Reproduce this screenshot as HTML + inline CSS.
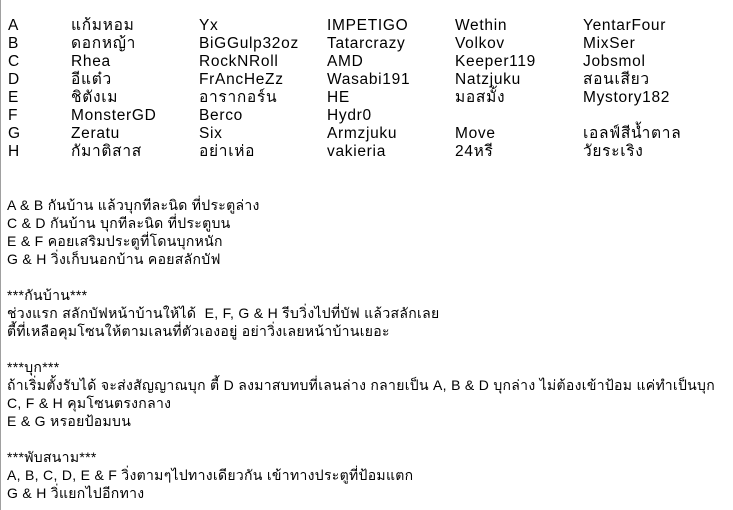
<!DOCTYPE html>
<html><head><meta charset="utf-8"><style>
body{margin:0;width:733px;height:510px;background:#fff;position:relative;overflow:hidden;color:#000}
.lb{position:absolute;left:0;top:0;width:1px;height:510px;background:#a0a0a0}
.t{position:absolute;font-family:"Liberation Sans",sans-serif;font-size:15.5px;letter-spacing:0.7px;line-height:18px;white-space:nowrap}
.b{position:absolute;left:7px;font-family:"Liberation Sans Narrow","Liberation Sans",sans-serif;font-size:14px;letter-spacing:0.3px;line-height:18px;white-space:nowrap}
</style></head><body>
<div class="lb"></div>
<div class="t" style="left:8px;top:17px">A<br>B<br>C<br>D<br>E<br>F<br>G<br>H</div>
<div class="t" style="left:71px;top:17px">แก้มหอม<br>ดอกหญ้า<br>Rhea<br>อีแต๋ว<br>ชิตังเม<br>MonsterGD<br>Zeratu<br>กัมาติสาส</div>
<div class="t" style="left:199px;top:17px">Yx<br>BiGGulp32oz<br>RockNRoll<br>FrAncHeZz<br>อารากอร์น<br>Berco<br>Six<br>อย่าเห่อ</div>
<div class="t" style="left:327px;top:17px">IMPETIGO<br>Tatarcrazy<br>AMD<br>Wasabi191<br>HE<br>Hydr0<br>Armzjuku<br>vakieria</div>
<div class="t" style="left:455px;top:17px">Wethin<br>Volkov<br>Keeper119<br>Natzjuku<br>มอสมั้ง<br>&nbsp;<br>Move<br>24หรี</div>
<div class="t" style="left:583px;top:17px">YentarFour<br>MixSer<br>Jobsmol<br>สอนเสียว<br>Mystory182<br>&nbsp;<br>เอลฟ์สีน้ำตาล<br>วัยระเริง</div>
<div class="b" style="top:196px">A &amp; B กันบ้าน แล้วบุกทีละนิด ที่ประตูล่าง<br>C &amp; D กันบ้าน บุกทีละนิด ที่ประตูบน<br>E &amp; F คอยเสริมประตูที่โดนบุกหนัก<br>G &amp; H วิ่งเก็บนอกบ้าน คอยสลักบัฟ<br>&nbsp;<br>***กันบ้าน***<br>ช่วงแรก สลักบัฟหน้าบ้านให้ได้&nbsp; E, F, G &amp; H รีบวิ่งไปที่บัฟ แล้วสลักเลย<br>ตี้ที่เหลือคุมโซนให้ตามเลนที่ตัวเองอยู่ อย่าวิ่งเลยหน้าบ้านเยอะ<br>&nbsp;<br>***บุก***<br>ถ้าเริ่มตั้งรับได้ จะส่งสัญญาณบุก ตี้ D ลงมาสบทบที่เลนล่าง กลายเป็น A, B &amp; D บุกล่าง ไม่ต้องเข้าป้อม แค่ทำเป็นบุก<br>C, F &amp; H คุมโซนตรงกลาง<br>E &amp; G หรอยป้อมบน<br>&nbsp;<br>***พับสนาม***<br>A, B, C, D, E &amp; F วิ่งตามๆไปทางเดียวกัน เข้าทางประตูที่ป้อมแตก<br>G &amp; H วิ่แยกไปอีกทาง</div>
</body></html>
